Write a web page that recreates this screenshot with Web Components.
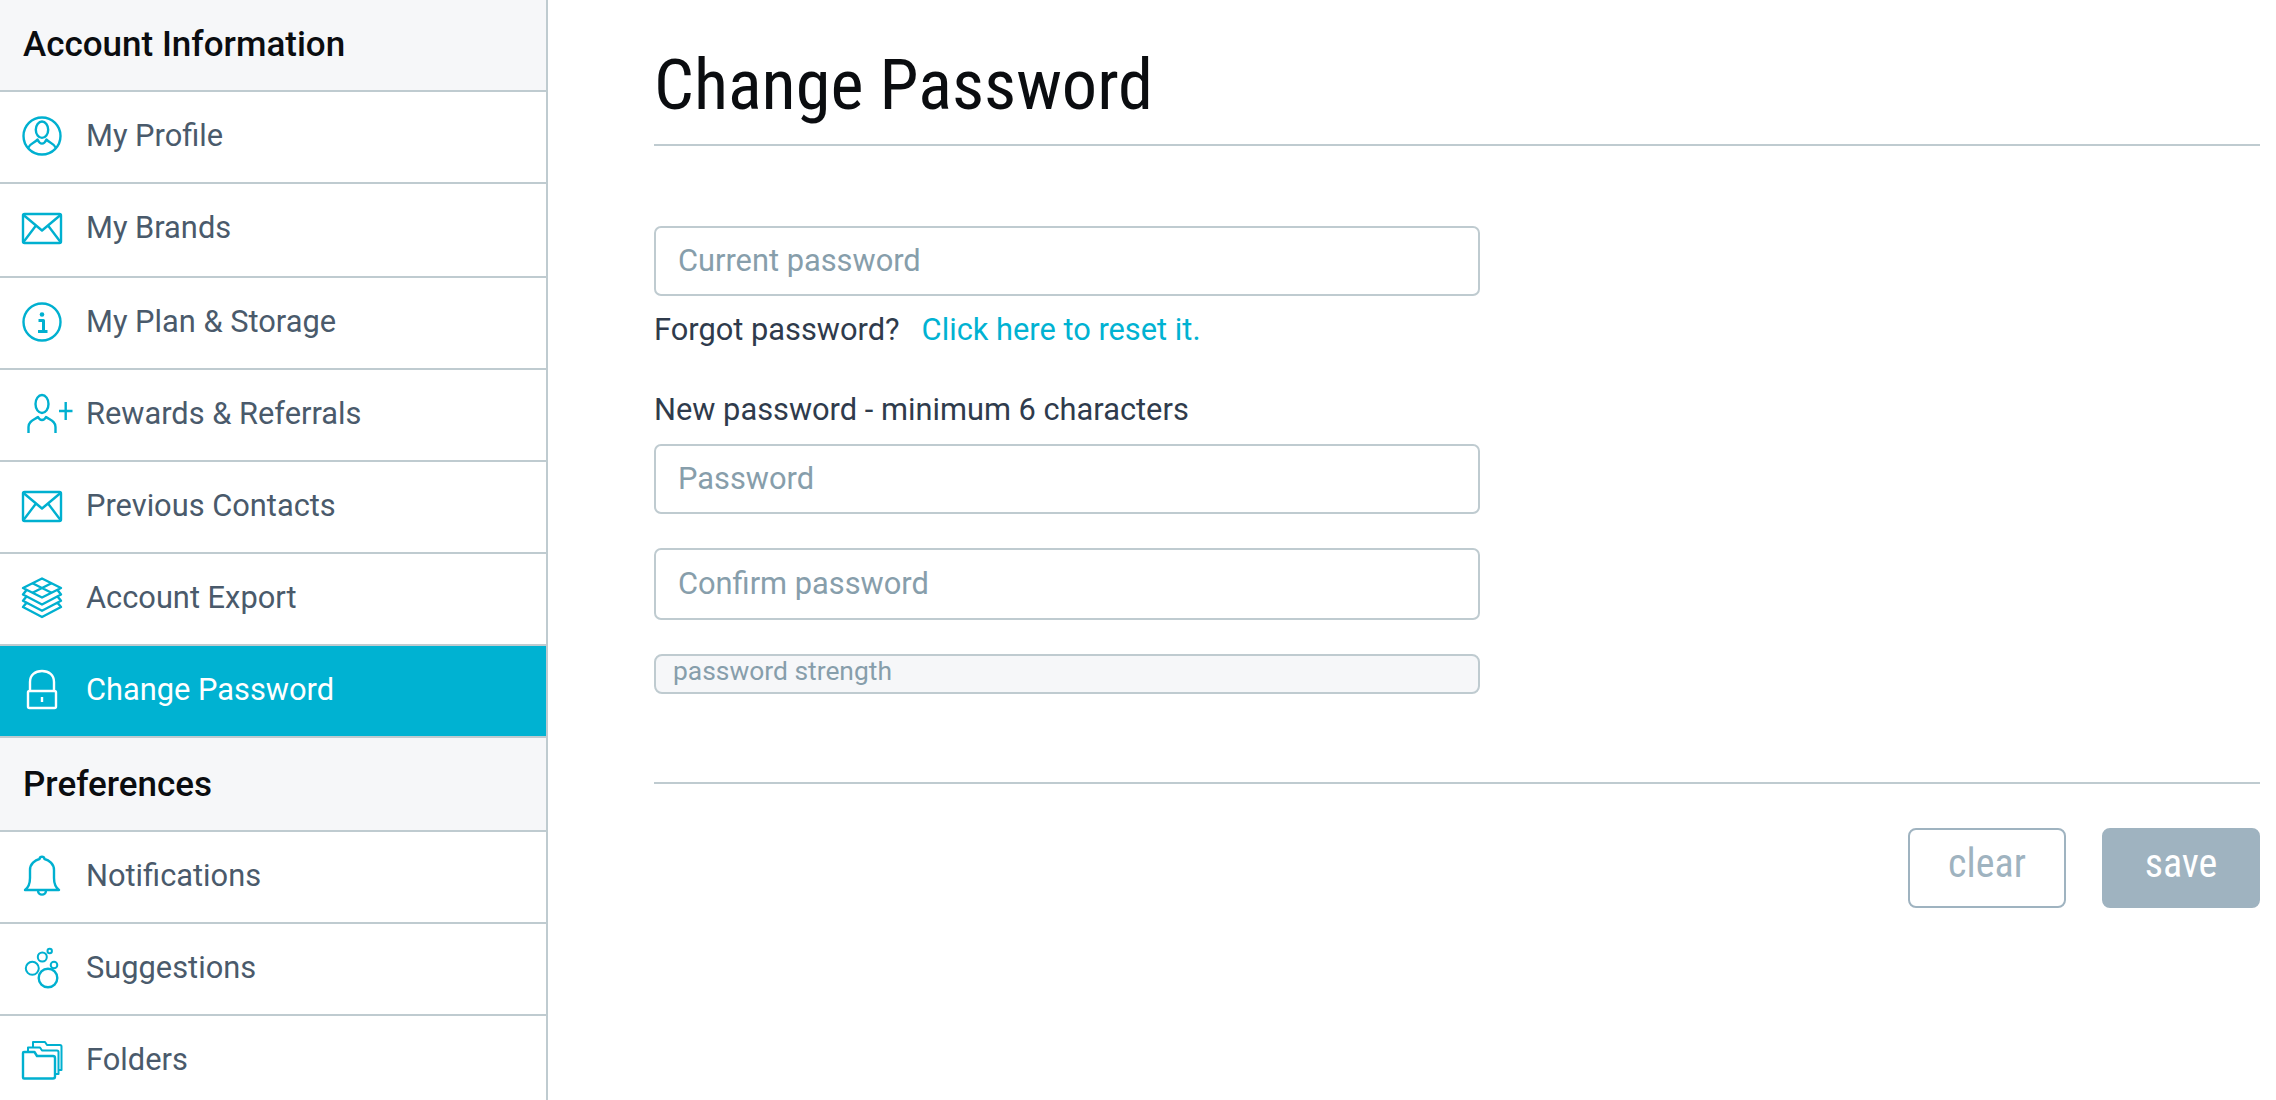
<!DOCTYPE html>
<html><head><meta charset="utf-8">
<style>
html,body{margin:0;height:1100px;overflow:hidden;background:#fff;font-family:Roboto,"Liberation Sans",sans-serif}
settings-page{height:1100px}
</style></head><body>
<settings-page>
  <side-nav slot="nav">
    <nav-head>Account Information</nav-head>
    <nav-item icon="profile">My Profile</nav-item>
    <nav-item icon="mail" tall>My Brands</nav-item>
    <nav-item icon="info">My Plan &amp; Storage</nav-item>
    <nav-item icon="reward">Rewards &amp; Referrals</nav-item>
    <nav-item icon="mail">Previous Contacts</nav-item>
    <nav-item icon="layers">Account Export</nav-item>
    <nav-item icon="lock" active>Change Password</nav-item>
    <nav-head tall>Preferences</nav-head>
    <nav-item icon="bell">Notifications</nav-item>
    <nav-item icon="bubbles">Suggestions</nav-item>
    <nav-item icon="folders">Folders</nav-item>
  </side-nav>
  <password-form></password-form>
</settings-page>
<script>
const ICONS={
profile:'<circle cx="22" cy="22" r="18.500"/><ellipse cx="22" cy="15.700" rx="6.200" ry="8.200"/><path d="M8.500 33.500C10 29 15 29 17.500 25.500C20 31 24 31 26.500 25.500C29 29 34 29 35.500 33.500"/>',
mail:'<rect x="3" y="8" width="38" height="29" rx="1.500"/><path d="M3.500 9L22 24.500L40.500 9M3.500 36L16 19.500M40.500 36L28 19.500"/>',
info:'<circle cx="22" cy="22" r="18.500"/><circle cx="22" cy="14.500" r="2.300" fill="currentColor" stroke="none"/><path stroke-width="3" d="M18.500 20.500H23.500V32M18 31.500H27.500"/>',
reward:'<ellipse cx="22" cy="12" rx="6.500" ry="9"/><path d="M8.500 41V35C8.500 29 14 28 18 25C20 29 24 29 26 25C30 28 35.500 29 35.500 35V41"/><path d="M39 19H52.500M45.700 10V28"/>',
layers:'<path d="M22 2.500L41 12L22 21.500L3 12Z"/><path d="M12.500 7.200L31.500 16.800M31.500 7.200L12.500 16.800"/><path d="M6.500 14L3 18.500L22 28.500L41 18.500L37.500 14M6.500 20.500L3 24.800L22 34.800L41 24.800L37.500 20.500M6.500 26.800L3 31L22 41L41 31L37.500 26.800"/>',
lock:'<rect x="8" y="23" width="28" height="17" rx="1.500"/><path d="M10 23V14C10 7 15 3 22 3C29 3 34 7 34 14V23"/><path d="M22 29V34"/>',
bell:'<path d="M5 36C9 33 10 29 10 24V16C10 10 15 6 19.500 5C20 2 24 2 24.500 5C29 6 34 10 34 16V24C34 29 35 33 39 36Z"/><path d="M18 36.500C18 42 26 42 26 36.500"/>',
bubbles:'<g stroke-width="2"><circle cx="28" cy="32" r="9.300" stroke-width="2.400"/><circle cx="12.300" cy="22.300" r="6.500"/><circle cx="22.300" cy="11" r="4.500"/><circle cx="34" cy="19" r="3.300"/><circle cx="29.700" cy="5" r="2.200"/></g>',
folders:'<path d="M4 40.500H33C34 40.500 35 39.500 35 38.500V20C35 19 34 18 33 18H17L14.500 14H4C3.500 14 3 14.500 3 15V39.500C3 40 3.500 40.500 4 40.500Z"/><path stroke-width="2" d="M8 14V9.500H20L22 12.500H37C38 12.500 38.500 13 38.500 14V36H35.500"/><path stroke-width="2" d="M13 9V4H25L27 7H40C41 7 41.500 7.500 41.500 8.500V32H38.500"/>'
};
function def(name,css,html){
  customElements.define(name,class extends HTMLElement{
    constructor(){super();const r=this.attachShadow({mode:'open'});r.innerHTML='<style>'+css+'</style>'+html;}
  });
}
def('settings-page',':host{display:flex;align-items:stretch;background:#fff}','<slot name="nav"></slot><slot></slot>');
def('side-nav',':host{display:flex;flex-direction:column;flex:none;width:546px;height:1100px;border-right:2px solid #bfcbd0;box-sizing:content-box;overflow:hidden}','<slot></slot>');
def('nav-head',`:host{display:flex;align-items:center;flex:none;box-sizing:border-box;height:92px;padding:0 0 2px 23px;background:#f6f7f9;border-bottom:2px solid #bfcbd0;color:#0b0d10;font:500 35px/1 Roboto,sans-serif}
:host([tall]){height:94px;padding-bottom:0}`,'<slot></slot>');
customElements.define('nav-item',class extends HTMLElement{
  constructor(){super();const r=this.attachShadow({mode:'open'});
    const k=this.getAttribute('icon');
    r.innerHTML=`<style>:host{display:flex;align-items:center;flex:none;box-sizing:border-box;height:92px;padding:0 0 2px 20px;gap:22px;background:#fff;border-bottom:2px solid #bfcbd0;color:#4a5a6b;font:400 30.800px/1 Roboto,sans-serif}
:host([tall]){height:94px;padding-bottom:4px}
:host([active]){background:#00b2d2;color:#fff}
svg{flex:none;width:44px;height:44px;overflow:visible;color:#00b0d0;fill:none;stroke:currentColor;stroke-width:2.400;stroke-linejoin:round}
:host([active]) svg{color:#fff}</style><svg viewBox="0 0 44 44" aria-hidden="true">${ICONS[k]}</svg><slot></slot>`;
  }
});
def('text-field',`:host{box-sizing:border-box;width:826px;height:var(--h,70px);border:2px solid #bfcbd0;border-radius:7px;padding:0 22px;display:flex;align-items:center;color:#879eab;font:400 30.800px/1 Roboto,sans-serif;background:#fff}`,'<slot></slot>');
def('strength-bar',`:host{box-sizing:border-box;width:826px;height:40px;border:2px solid #bfcbd0;border-radius:8px;padding:0 17px 6px;display:flex;align-items:center;color:#879eab;font:400 26.400px/1 Roboto,sans-serif;background:#f6f7f9}`,'<slot></slot>');
def('action-button',`:host{display:flex;align-items:center;justify-content:center;box-sizing:border-box;width:158px;height:80px;border:2px solid #9fb3c0;border-radius:8px;color:#9fb3c0;font:400 40px/1 Roboto,sans-serif;font-stretch:75%;padding-bottom:8px;background:#fff}
:host([solid]){background:#9fb3c0;color:#fff}`,'<slot></slot>');
def('password-form',`:host{display:block;flex:none;width:1606px;margin-left:106px;font-family:Roboto,sans-serif}
h1{margin:0;height:146px;box-sizing:border-box;padding-top:50px;border-bottom:2px solid #bfcbd0;font:400 70.400px/1 Roboto,sans-serif;font-stretch:75%;color:#0b0d10}
.a{margin-top:80px}
.line{font-size:30.800px;line-height:36px;color:#2f3b4c}
.forgot{margin-top:16px;display:flex;gap:22px}
a{color:#00b2d2;text-decoration:none}
.new{margin-top:44px}
.p{margin-top:16px}
.c{margin-top:34px}
.s{margin-top:34px}
hr{margin:88px 0 0;border:0;border-top:2px solid #bfcbd0}
.btns{display:flex;justify-content:flex-end;gap:36px;margin-top:44px}
`,`<h1>Change Password</h1>
<text-field class="a">Current password</text-field>
<div class="line forgot"><span>Forgot password?</span><a href="#">Click here to reset it.</a></div>
<div class="line new">New password - minimum 6 characters</div>
<text-field class="p">Password</text-field>
<text-field class="c" style="--h:72px">Confirm password</text-field>
<strength-bar class="s">password strength</strength-bar>
<hr>
<div class="btns"><action-button>clear</action-button><action-button solid>save</action-button></div>`);
</script>
</body></html>
